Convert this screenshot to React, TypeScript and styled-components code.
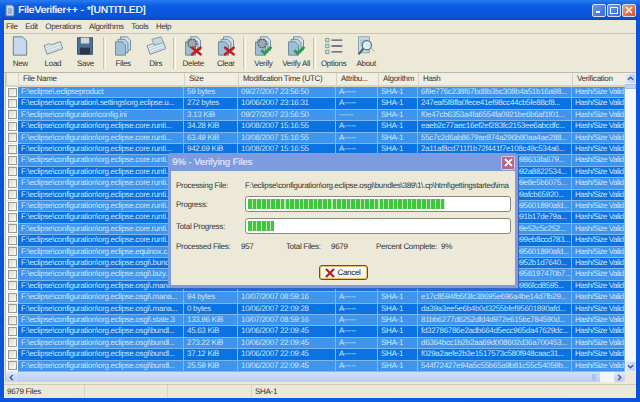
import React from 'react';
import styled, {createGlobalStyle} from 'styled-components';

const COLUMNS = '12px 166px 54px 98px 42px 40px 154px 53px';

const GlobalStyle = createGlobalStyle`
    html, body {
        margin:0;
        padding:0;
        width:640px;
        height:402px;
        overflow:hidden;
        background:#0a4ed0;
    }
    * {
        box-sizing:border-box;
    }
`

const Window = styled.div`
    position:relative;
    width:640px;
    height:402px;
    display:flex;
    flex-direction:column;
    font-family:"Liberation Sans", Arial, sans-serif;
    font-size:8px;
    letter-spacing:-.3px;
    text-rendering:geometricPrecision;
    color:#222;
    background:linear-gradient(90deg,#0a55dc,#0b5fe6 50%,#0a55dc);
    overflow:hidden;
`

const TitleBar = styled.div`
    height:20px;
    flex:none;
    display:flex;
    align-items:center;
    padding:0 4px 0 5px;
    background:linear-gradient(180deg,#2a7cf0 0%,#0a5ae2 30%,#0a55d8 80%,#0a48c0 100%);
`

const TitleText = styled.span`
    margin-left:3px;
    font-size:10px;
    letter-spacing:.05px;
    text-shadow:.4px 0 0 #e8f0ff;
    color:#e8f0ff;
    white-space:pre;
`

const TitleButtons = styled.div`
    margin-left:auto;
    display:flex;
    gap:1px;
`

const CaptionButton = styled.div<{$close?:boolean}>`
    width:14px;
    height:13px;
    border:1px solid #d4e0f8;
    border-radius:2px;
    display:flex;
    align-items:center;
    justify-content:center;
    background:${({$close}) => $close ? 'linear-gradient(135deg,#f09a7c,#d8502c)' : 'linear-gradient(135deg,#6a98ee,#3a68d8)'};
`

const Client = styled.div`
    flex:1;
    min-height:0;
    margin:0 4px 4px;
    display:flex;
    flex-direction:column;
    background:#ece9d8;
`

const MenuBar = styled.div`
    height:13px;
    flex:none;
    display:flex;
    align-items:center;
    padding-left:2px;
    gap:7.5px;
    color:#333;
`

const ToolBar = styled.div`
    height:40px;
    flex:none;
    display:flex;
    align-items:flex-start;
    padding:2px 0 0 0;
    border-top:1px solid #c9c6b6;
    border-bottom:1px solid #bdbaa8;
`

const ToolButton = styled.div`
    width:32.6px;
    flex:none;
    display:flex;
    flex-direction:column;
    align-items:center;
    gap:3px;
    color:#333;
    white-space:nowrap;
`

const ToolSeparator = styled.div`
    width:3px;
    height:32px;
    margin:1px 1px 0;
    flex:none;
    border-left:1px solid #c8c5b4;
    border-right:1px solid #fbfaf4;
`

const TableWrap = styled.div`
    flex:1;
    min-height:0;
    display:grid;
    grid-template-columns:1fr 11px;
    grid-template-rows:1fr 10px;
    margin-left:1px;
    background:#fff;
    border-left:1px solid #c4c1b0;
`

const TableColumn = styled.div`
    min-width:0;
    min-height:0;
    display:flex;
    flex-direction:column;
`

const HeaderRow = styled.div`
    height:14px;
    flex:none;
    display:grid;
    grid-template-columns:${COLUMNS};
    background:#f0eee2;
    border-bottom:2px solid #d8d5c5;
`

const HeaderCell = styled.div`
    padding-left:4px;
    line-height:12px;
    color:#333;
    white-space:nowrap;
    overflow:hidden;
    border-left:1px solid #d5d2c2;
`

const Rows = styled.div`
    flex:1;
    min-height:0;
    display:grid;
    grid-auto-rows:1fr;
`

const Row = styled.div<{$dark:boolean}>`
    display:grid;
    grid-template-columns:${COLUMNS};
    min-height:0;
    color:#cfe4fb;
    background:${({$dark}) => $dark ? '#0b72e2' : '#3f95ec'};
`

const CheckCell = styled.div`
    background:#fff;
    display:flex;
    align-items:center;
    justify-content:center;
    border-bottom:1px solid #e8e8e8;
`

const CheckBox = styled.div`
    width:9px;
    height:9px;
    border:1px solid #9a9a90;
    background:linear-gradient(135deg,#dcdcd4,#fafaf6);
`

const Cell = styled.div`
    padding-left:3px;
    line-height:10px;
    white-space:nowrap;
    overflow:hidden;
    border-bottom:1px solid #7db8f2;
    border-right:1px solid #7db8f2;
`

const VerifyCell = styled(Cell)`
    letter-spacing:-.5px;
`

const VScroll = styled.div`
    display:flex;
    flex-direction:column;
    background:#f7f8fd;
`

const ScrollButton = styled.div`
    flex:none;
    height:11px;
    display:flex;
    align-items:center;
    justify-content:center;
    background:linear-gradient(90deg,#dfe8fb,#bccdf4);
    border:1px solid #e8eefc;
    border-radius:2px;
`

const VThumb = styled.div`
    height:5px;
    flex:none;
    background:#c4d3f4;
    border:1px solid #aabde8;
`

const VTrack = styled.div`
    flex:1;
`

const HScroll = styled.div`
    display:flex;
    align-items:stretch;
    background:#f4f5fa;
`

const HButton = styled.div`
    width:11px;
    flex:none;
    display:flex;
    align-items:center;
    justify-content:center;
    background:linear-gradient(180deg,#dfe8fb,#bccdf4);
    border-radius:2px;
`

const HThumb = styled.div`
    width:583px;
    flex:none;
    display:flex;
    align-items:center;
    justify-content:flex-end;
    padding-right:4px;
    font-size:7px;
    color:#8fa6dc;
    background:linear-gradient(180deg,#d2dff8,#bccdf2);
`

const Corner = styled.div`
    background:#ece9d8;
`

const StatusBar = styled.div`
    height:14px;
    margin-top:2px;
    flex:none;
    display:grid;
    grid-template-columns:81px 83px 84px 1fr;
    border-top:1px solid #cfccba;
    color:#333;
    line-height:13px;
    background:#ece9d8;
`

const StatusPanel = styled.div`
    padding-left:3px;
    border-right:1px solid #d6d3c2;
    white-space:nowrap;
    &:last-child {
        border-right:none;
    }
`

const Dialog = styled.div`
    position:absolute;
    left:168px;
    top:153px;
    width:350px;
    height:135px;
    display:flex;
    flex-direction:column;
    padding:0 3px 3px;
    background:#7f9be0;
    border-radius:3px 3px 0 0;
    box-shadow:1px 1px 0 #3a62c0;
`

const DialogTitle = styled.div`
    height:18px;
    flex:none;
    display:flex;
    align-items:center;
    justify-content:space-between;
    padding:1px 0 0 1px;
    font-size:9.5px;
    letter-spacing:-.05px;
    text-shadow:.4px 0 0 #d5def5;
    color:#d5def5;
`

const DialogClose = styled.div`
    width:14px;
    height:14px;
    display:flex;
    align-items:center;
    justify-content:center;
    border:1px solid #e0c8d8;
    border-radius:2px;
    background:#b0688a;
`

const DialogBody = styled.div`
    flex:1;
    display:flex;
    flex-direction:column;
    padding:9px 4px 0 5px;
    background:#ece9d8;
`

const FieldRow = styled.div`
    display:grid;
    grid-template-columns:69px 266px;
    align-items:center;
    min-height:16px;
    margin-bottom:6px;
    color:#333;
`

const PathRow = styled(FieldRow)`
    min-height:11px;
    margin-bottom:5px;
    line-height:11px;
`

const PathValue = styled.div`
    overflow:hidden;
    white-space:nowrap;
`

const Bar = styled.div`
    height:16px;
    padding:2px;
    background:#fff;
    border:1px solid #8a8878;
    border-radius:3px;
`

const BarFill = styled.div<{$width:number}>`
    width:${({$width}) => $width}px;
    height:100%;
    background:repeating-linear-gradient(90deg,#3fc63f 0,#3fc63f 3.6px,#c2e8b8 3.6px,#c2e8b8 4.7px);
`

const Stats = styled.div`
    display:grid;
    grid-template-columns:65px 45px 45px 45px 65px auto;
    margin-top:2px;
    color:#333;
`

const ButtonRow = styled.div`
    display:flex;
    justify-content:center;
    margin-top:14px;
    padding-right:1px;
`

const CancelButton = styled.div`
    width:49px;
    height:15px;
    display:flex;
    align-items:center;
    justify-content:center;
    gap:2px;
    color:#222;
    background:linear-gradient(180deg,#fff,#f0efe6);
    border:1px solid #55553f;
    border-radius:3px;
    box-shadow:inset 0 0 0 1px #e8c070;
`

const Page = ({x = 0, y = 0, fill = '#b8cfe6'}: {x?: number; y?: number; fill?: string}) => (
    <path d={`M${x + 3} ${y + 2}h8l4 4v12h-12z`} fill={fill} stroke="#5f7f92" strokeWidth="1"/>
);

const Pages = () => (
    <>
        <Page x={6} y={-1} fill="#d4e2ec"/>
        <Page x={3} y={2} fill="#bcd2e4"/>
        <Page x={0} y={5} fill="#a0bdd6"/>
    </>
);

const RedCross = () => (
    <path d="M11 14l10 8M21 14l-10 8" stroke="#c02020" strokeWidth="3.2" strokeLinecap="round"/>
);

const GreenCheck = () => (
    <path d="M10 17l4 4 8-8" fill="none" stroke="#2f9a4a" strokeWidth="3.4"/>
);

const Gear = () => (
    <circle cx="11" cy="9" r="5" fill="#9eaab0" stroke="#4c5a60" strokeWidth="1.6" strokeDasharray="2 1"/>
);

const Tilted = () => (
    <g transform="rotate(-20 12 12)">
        <path d="M2 8h7l2 2h11v9H2z" fill="#e8eef2" stroke="#708a98"/>
        <path d="M3 11h18M3 14h18M3 17h18" stroke="#b4c4ce"/>
    </g>
);

const ICONS: Record<string, React.ReactNode> = {
    New: <path d="M4 1h11l5 5v17H4z" fill="#c6d8ea" stroke="#6c8496" strokeWidth="1.2"/>,
    Load: <Tilted/>,
    Save: (
        <>
            <path d="M3 2h18v20H3z" fill="#4a6f92" stroke="#33475c"/>
            <path d="M7 2h10v7H7z" fill="#cfd8e0"/>
            <path d="M6 14h12v8H6z" fill="#26384a"/>
        </>
    ),
    Files: <Pages/>,
    Dirs: (
        <>
            <Tilted/>
            <path d="M7 4l11-3 3 7-11 3z" fill="#c6d6e4" stroke="#7a94a6"/>
        </>
    ),
    Delete: <><Pages/><Gear/><RedCross/></>,
    Clear: <><Pages/><RedCross/></>,
    Verify: <><Pages/><Gear/><GreenCheck/></>,
    'Verify All': <><Pages/><GreenCheck/></>,
    Options: (
        <>
            <path d="M2 3h4v4H2zM2 10h4v4H2zM2 17h4v4H2z" fill="#cfe4dc" stroke="#5f9a80"/>
            <path d="M9 5h13M9 12h13M9 19h13" stroke="#556" strokeWidth="1.6"/>
        </>
    ),
    About: (
        <>
            <path d="M3 1h13v19H3z" fill="#cbdde6" stroke="#7b96a4"/>
            <path d="M5 5h8M5 8h6M5 11h5" stroke="#8aa4b0"/>
            <circle cx="13" cy="11" r="5.5" fill="#dceef4" stroke="#56707e" strokeWidth="1.5"/>
            <path d="M9 15l-6 7" stroke="#4a6270" strokeWidth="2.4"/>
            <path d="M18 15l4 3" stroke="#d09a40"/>
        </>
    ),
};

const TOOLS = [['New', 'Load', 'Save'], ['Files', 'Dirs'], ['Delete', 'Clear'], ['Verify', 'Verify All'], ['Options', 'About']];

const HEADERS = ['', 'File Name', 'Size', 'Modification Time (UTC)', 'Attribu...', 'Algorithm', 'Hash', 'Verification'];

const CFG = 'F:\\eclipse\\configuration\\';
const CORE = `${CFG}org.eclipse.core.runti...`;
const OSGI = `${CFG}org.eclipse.osgi\\`;
const BUNDLE = `${OSGI}bundl...`;
const TIME = '10/08/2007 15:16:55';

// hidden part of the middle rows only pads the hash so the tail lands beside the dialog
const HIDDEN = 'a3c1e7f04b92d86a5fc3e17b09';

const ROWS: [string, string, string, string, string][] = [
    ['F:\\eclipse\\.eclipseproduct', '59 bytes', '09/27/2007 23:56:50', 'A-----', '6f9e776c238f67bd8b3bc308b4a51b16a98...'],
    [`${CFG}.settings\\org.eclipse.u...`, '272 bytes', '10/06/2007 23:16:31', 'A-----', '247eaf5f8ffa0fece41ef98cc44cb5fe88cf8...'],
    [`${CFG}config.ini`, '3.13 KiB', '09/27/2007 23:56:50', '------', 'f0e47cb6353a4fa6554fa0921be6b6af1f01...'],
    [CORE, '34.28 KiB', TIME, 'A-----', 'eaeb2c77aec16ef2ef283fc2153ee6abcdfc...'],
    [CORE, '63.49 KiB', TIME, 'A-----', '55c7c2d6ab8679ae874a296b80aa4ae288...'],
    [CORE, '942.69 KiB', TIME, 'A-----', '2a11af8cd711f1b72f441f7e108c49c534a6...'],
    [CORE, '18.20 KiB', TIME, 'A-----', `${HIDDEN}8633fa679...`],
    [CORE, '21.07 KiB', TIME, 'A-----', `${HIDDEN}2a8822534...`],
    [CORE, '11.52 KiB', TIME, 'A-----', `${HIDDEN}e8e5b6075...`],
    [CORE, '44.31 KiB', TIME, 'A-----', `${HIDDEN}afcb65920...`],
    [CORE, '0 bytes', TIME, 'A-----', `${HIDDEN}5601890afd...`],
    [CORE, '9.16 KiB', TIME, 'A-----', `${HIDDEN}1b17de79a...`],
    [CORE, '30.44 KiB', TIME, 'A-----', `${HIDDEN}e52c5c252...`],
    [CORE, '27.93 KiB', TIME, 'A-----', `${HIDDEN}9eb8ccd783...`],
    [`${CFG}org.eclipse.equinox.c...`, '0 bytes', TIME, 'A-----', `${HIDDEN}5601890afd...`],
    [`${OSGI}.bundle...`, '12.40 KiB', TIME, 'A-----', `${HIDDEN}52b1d7640...`],
    [`${OSGI}.lazy...`, '88 bytes', TIME, 'A-----', `${HIDDEN}58197470b7...`],
    [`${OSGI}.mana...`, '1.02 KiB', TIME, 'A-----', `${HIDDEN}86fcd8595...`],
    [`${OSGI}.mana...`, '94 bytes', '10/07/2007 08:59:16', 'A-----', 'e17c8594fb5f3fc38695e696a4be14d7fb29...'],
    [`${OSGI}.mana...`, '0 bytes', '10/06/2007 22:09:28', 'A-----', 'da39a3ee5e6b4b0d3255bfef95601890afd...'],
    [`${OSGI}.state.3`, '133.96 KiB', '10/07/2007 08:59:16', 'A-----', '81bb6277d6252dfd4d972e615bc784590d...'],
    [BUNDLE, '45.63 KiB', '10/06/2007 22:09:45', 'A-----', 'fd32786786e2adb664d5ecc965da47629dc...'],
    [BUNDLE, '273.22 KiB', '10/06/2007 22:09:45', 'A-----', 'd6364bcc1b2b2aa69d008602d36a700453...'],
    [BUNDLE, '37.12 KiB', '10/06/2007 22:09:45', 'A-----', 'f029a2aefe2b3e1517573c580f948caac31...'],
    [BUNDLE, '25.59 KiB', '10/06/2007 22:09:45', 'A-----', '544f72427e94a5c55b65a9b81c55c54059b...'],
];

const Arrow = ({d}: {d: string}) => (
    <svg width="7" height="7" viewBox="0 0 8 8">
        <path d={d} fill="none" stroke="#40588c" strokeWidth="1.6"/>
    </svg>
);

const App = () => {
    return (
        <Window>
            <GlobalStyle/>
            <TitleBar>
                <svg width="10" height="13" viewBox="0 0 10 13">
                    <path d="M1 1h6l2 2v9H1z" fill="#c8d8ec" stroke="#5a7aa0"/>
                    <path d="M3 5h4M3 7h4M3 9h4" stroke="#6a8ab0"/>
                </svg>
                <TitleText>FileVerifier++ - *[UNTITLED]</TitleText>
                <TitleButtons>
                    <CaptionButton>
                        <svg width="8" height="8" viewBox="0 0 8 8"><path d="M1 6h4" stroke="#fff" strokeWidth="2"/></svg>
                    </CaptionButton>
                    <CaptionButton>
                        <svg width="8" height="8" viewBox="0 0 8 8"><path d="M.5 1.5h7v6h-7z" fill="none" stroke="#fff"/></svg>
                    </CaptionButton>
                    <CaptionButton $close>
                        <svg width="8" height="8" viewBox="0 0 8 8"><path d="M1 1l6 6M7 1l-6 6" stroke="#fff" strokeWidth="1.6"/></svg>
                    </CaptionButton>
                </TitleButtons>
            </TitleBar>
            <Client>
                <MenuBar>
                    {['File', 'Edit', 'Operations', 'Algorithms', 'Tools', 'Help'].map(item => (
                        <span key={item}>{item}</span>
                    ))}
                </MenuBar>
                <ToolBar>
                    {TOOLS.map((group, i) => (
                        <React.Fragment key={i}>
                            {i > 0 && <ToolSeparator/>}
                            {group.map(name => (
                                <ToolButton key={name}>
                                    <svg width="20" height="20" viewBox="0 0 24 24">{ICONS[name]}</svg>
                                    {name}
                                </ToolButton>
                            ))}
                        </React.Fragment>
                    ))}
                </ToolBar>
                <TableWrap>
                    <TableColumn>
                        <HeaderRow>
                            {HEADERS.map((h, i) => <HeaderCell key={i}>{h}</HeaderCell>)}
                        </HeaderRow>
                        <Rows>
                            {ROWS.map((row, i) => (
                                <Row key={i} $dark={i % 2 === 1}>
                                    <CheckCell><CheckBox/></CheckCell>
                                    <Cell>{row[0]}</Cell>
                                    <Cell>{row[1]}</Cell>
                                    <Cell>{row[2]}</Cell>
                                    <Cell>{row[3]}</Cell>
                                    <Cell>SHA-1</Cell>
                                    <Cell>{row[4]}</Cell>
                                    <VerifyCell>Hash/Size Valid</VerifyCell>
                                </Row>
                            ))}
                        </Rows>
                    </TableColumn>
                    <VScroll>
                        <ScrollButton><Arrow d="M1 5.5l3-3 3 3"/></ScrollButton>
                        <VThumb/>
                        <VTrack/>
                        <ScrollButton><Arrow d="M1 2.5l3 3 3-3"/></ScrollButton>
                    </VScroll>
                    <HScroll>
                        <HButton><Arrow d="M5.5 1l-3 3 3 3"/></HButton>
                        <HThumb>|||</HThumb>
                        <VTrack/>
                        <HButton><Arrow d="M2.5 1l3 3-3 3"/></HButton>
                    </HScroll>
                    <Corner/>
                </TableWrap>
                <StatusBar>
                    <StatusPanel>9679 Files</StatusPanel>
                    <StatusPanel/>
                    <StatusPanel/>
                    <StatusPanel>SHA-1</StatusPanel>
                </StatusBar>
            </Client>
            <Dialog>
                <DialogTitle>
                    9% - Verifying Files
                    <DialogClose>
                        <svg width="9" height="9" viewBox="0 0 9 9"><path d="M1 1l7 7M8 1l-7 7" stroke="#fff" strokeWidth="1.8"/></svg>
                    </DialogClose>
                </DialogTitle>
                <DialogBody>
                    <PathRow>
                        <span>Processing File:</span>
                        <PathValue>F:\eclipse\configuration\org.eclipse.osgi\bundles\389\1\.cp\html\gettingstarted\ima</PathValue>
                    </PathRow>
                    <FieldRow>
                        <span>Progress:</span>
                        <Bar><BarFill $width={197}/></Bar>
                    </FieldRow>
                    <FieldRow>
                        <span>Total Progress:</span>
                        <Bar><BarFill $width={26}/></Bar>
                    </FieldRow>
                    <Stats>
                        <span>Processed Files:</span>
                        <span>957</span>
                        <span>Total Files:</span>
                        <span>9679</span>
                        <span>Percent Complete:</span>
                        <span>9%</span>
                    </Stats>
                    <ButtonRow>
                        <CancelButton>
                            <svg width="10" height="10" viewBox="0 0 10 10"><path d="M1 1l8 8M9 1l-8 8" stroke="#b02020" strokeWidth="2.2"/></svg>
                            Cancel
                        </CancelButton>
                    </ButtonRow>
                </DialogBody>
            </Dialog>
        </Window>
    );
};

export default App;
